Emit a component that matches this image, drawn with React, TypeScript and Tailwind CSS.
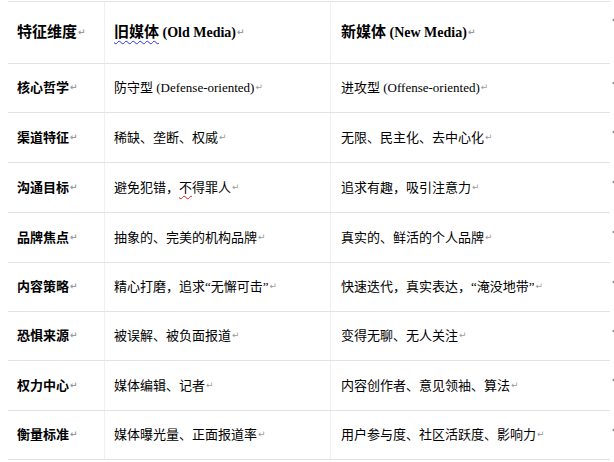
import React from 'react';

type Row = {
  dim: string;
  old: React.ReactNode;
  neu: React.ReactNode;
  h: string;
};

const Mark = () => (
  <span className="ml-[1px] text-[9px] text-[#9a9a9a] font-['DejaVu_Sans']">↵</span>
);

const rows: Row[] = [
  { dim: '核心哲学', old: '防守型 (Defense-oriented)', neu: '进攻型 (Offense-oriented)', h: 'h-[49px]' },
  { dim: '渠道特征', old: '稀缺、垄断、权威', neu: '无限、民主化、去中心化', h: 'h-[50px]' },
  {
    dim: '沟通目标',
    old: (
      <>
        避免犯错，<span className="underline decoration-wavy decoration-[#e02020] decoration-1 underline-offset-[3px]">不</span>得罪人
      </>
    ),
    neu: '追求有趣，吸引注意力',
    h: 'h-[50px]'
  },
  { dim: '品牌焦点', old: '抽象的、完美的机构品牌', neu: '真实的、鲜活的个人品牌', h: 'h-[50px]' },
  { dim: '内容策略', old: '精心打磨，追求“无懈可击”', neu: '快速迭代，真实表达，“淹没地带”', h: 'h-[49px]' },
  { dim: '恐惧来源', old: '被误解、被负面报道', neu: '变得无聊、无人关注', h: 'h-[49px]' },
  { dim: '权力中心', old: '媒体编辑、记者', neu: '内容创作者、意见领袖、算法', h: 'h-[50px]' },
  { dim: '衡量标准', old: '媒体曝光量、正面报道率', neu: '用户参与度、社区活跃度、影响力', h: 'h-[49px]' }
];

const EndMark = () => (
  <div className="w-[4px] pt-[16px] pl-[2px]">
    <svg width="4" height="6" viewBox="0 0 4 6">
      <path d="M4 0 L0 3 L4 6 Z" fill="#8a8a8a" />
    </svg>
  </div>
);

export default function App() {
  return (
    <div className="w-[614px] h-[462px] bg-white overflow-hidden font-['Liberation_Serif','Noto_Sans_CJK_SC',serif] text-black">
      <div className="pl-[8px] pt-[1px]">
        <div className="flex">
          <div className="flex w-[602px] h-[63px] border-y border-[#e2e2e8]">
            <div className="w-[96px] flex items-center pl-[9px] text-[15px] font-bold">
              特征维度<Mark />
            </div>
            <div className="w-[226px] flex items-center pl-[9px] border-l border-[#eef0f4] text-[15px] font-bold">
              <span className="underline decoration-wavy decoration-[#3030ff] decoration-1 underline-offset-[3px]">旧媒体</span>
              <span className="text-[14px]">&nbsp;(Old Media)</span>
              <Mark />
            </div>
            <div className="flex-1 flex items-center pl-[10px] border-l border-[#eef0f4] text-[15px] font-bold">
              新媒体<span className="text-[14px]">&nbsp;(New Media)</span>
              <Mark />
            </div>
          </div>
          <EndMark />
        </div>
        {rows.map((r) => (
          <div key={r.dim} className="flex">
            <div className={`flex w-[602px] ${r.h} border-b border-[#e2e2e8]`}>
              <div className="w-[96px] flex items-center pl-[9px] text-[13px] font-bold">
                {r.dim}
                <Mark />
              </div>
              <div className="w-[226px] flex items-center pl-[9px] border-l border-[#eef0f4] text-[13px]">
                <span>{r.old}</span>
                <Mark />
              </div>
              <div className="flex-1 flex items-center pl-[10px] border-l border-[#eef0f4] text-[13px]">
                <span>{r.neu}</span>
                <Mark />
              </div>
            </div>
            <EndMark />
          </div>
        ))}
      </div>
    </div>
  );
}
